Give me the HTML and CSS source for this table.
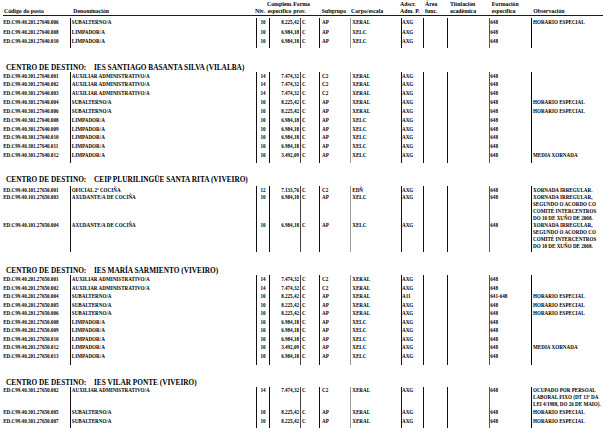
FILE: index.html
```html
<!DOCTYPE html>
<html lang="gl">
<head>
<meta charset="utf-8">
<title>RPT - Centros de destino</title>
<link rel="stylesheet" href="styles.css">
</head>
<body>
<div class="page">
  <div class="thead">
    <div class="th h-code">Código do posto</div>
    <div class="th h-den">Denominación</div>
    <div class="th h-niv">Niv.</div>
    <div class="th h-cmp">Complem.<br>específico</div>
    <div class="th h-fp">Forma<br>prov.</div>
    <div class="th h-sg">Subgrupo</div>
    <div class="th h-ce">Corpo/escala</div>
    <div class="th h-ad">Adscr.<br>Adm. P.</div>
    <div class="th h-ar">Área<br>func.</div>
    <div class="th h-ti">Titulación<br>académica</div>
    <div class="th h-fe">Formación<br>específica</div>
    <div class="th h-ob">Observación</div>
  </div>

  <div class="sec s1">
    <div class="rows">
      <div class="row"><span class="c code">ED.C99.40.201.27640.006</span><span class="c den">SUBALTERNO/A</span><span class="c niv">10</span><span class="c cmp">8.225,42</span><span class="c fp">C</span><span class="c sg">AP</span><span class="c ce">XERAL</span><span class="c ad">AXG</span><span class="c ar"></span><span class="c ti"></span><span class="c fe">648</span><span class="c ob">HORARIO ESPECIAL</span></div>
      <div class="row"><span class="c code">ED.C99.40.201.27640.008</span><span class="c den">LIMPADOR/A</span><span class="c niv">10</span><span class="c cmp">6.984,18</span><span class="c fp">C</span><span class="c sg">AP</span><span class="c ce">XELC</span><span class="c ad">AXG</span><span class="c ar"></span><span class="c ti"></span><span class="c fe">648</span><span class="c ob"></span></div>
      <div class="row"><span class="c code">ED.C99.40.201.27640.010</span><span class="c den">LIMPADOR/A</span><span class="c niv">10</span><span class="c cmp">6.984,18</span><span class="c fp">C</span><span class="c sg">AP</span><span class="c ce">XELC</span><span class="c ad">AXG</span><span class="c ar"></span><span class="c ti"></span><span class="c fe">648</span><span class="c ob"></span></div>
    </div>
  </div>

  <div class="sec s2">
    <h2 class="sec-title"><span class="lbl">CENTRO DE DESTINO:</span><span class="name">IES SANTIAGO BASANTA SILVA (VILALBA)</span></h2>
    <div class="rows">
      <div class="row"><span class="c code">ED.C99.40.301.27640.001</span><span class="c den">AUXILIAR ADMINISTRATIVO/A</span><span class="c niv">14</span><span class="c cmp">7.474,32</span><span class="c fp">C</span><span class="c sg">C2</span><span class="c ce">XERAL</span><span class="c ad">AXG</span><span class="c ar"></span><span class="c ti"></span><span class="c fe">648</span><span class="c ob"></span></div>
      <div class="row"><span class="c code">ED.C99.40.301.27640.002</span><span class="c den">AUXILIAR ADMINISTRATIVO/A</span><span class="c niv">14</span><span class="c cmp">7.474,32</span><span class="c fp">C</span><span class="c sg">C2</span><span class="c ce">XERAL</span><span class="c ad">AXG</span><span class="c ar"></span><span class="c ti"></span><span class="c fe">648</span><span class="c ob"></span></div>
      <div class="row"><span class="c code">ED.C99.40.301.27640.003</span><span class="c den">AUXILIAR ADMINISTRATIVO/A</span><span class="c niv">14</span><span class="c cmp">7.474,32</span><span class="c fp">C</span><span class="c sg">C2</span><span class="c ce">XERAL</span><span class="c ad">AXG</span><span class="c ar"></span><span class="c ti"></span><span class="c fe">648</span><span class="c ob"></span></div>
      <div class="row"><span class="c code">ED.C99.40.301.27640.004</span><span class="c den">SUBALTERNO/A</span><span class="c niv">10</span><span class="c cmp">8.225,42</span><span class="c fp">C</span><span class="c sg">AP</span><span class="c ce">XERAL</span><span class="c ad">AXG</span><span class="c ar"></span><span class="c ti"></span><span class="c fe">648</span><span class="c ob">HORARIO ESPECIAL</span></div>
      <div class="row"><span class="c code">ED.C99.40.301.27640.006</span><span class="c den">SUBALTERNO/A</span><span class="c niv">10</span><span class="c cmp">8.225,42</span><span class="c fp">C</span><span class="c sg">AP</span><span class="c ce">XERAL</span><span class="c ad">AXG</span><span class="c ar"></span><span class="c ti"></span><span class="c fe">648</span><span class="c ob">HORARIO ESPECIAL</span></div>
      <div class="row"><span class="c code">ED.C99.40.301.27640.008</span><span class="c den">LIMPADOR/A</span><span class="c niv">10</span><span class="c cmp">6.984,18</span><span class="c fp">C</span><span class="c sg">AP</span><span class="c ce">XELC</span><span class="c ad">AXG</span><span class="c ar"></span><span class="c ti"></span><span class="c fe">648</span><span class="c ob"></span></div>
      <div class="row"><span class="c code">ED.C99.40.301.27640.009</span><span class="c den">LIMPADOR/A</span><span class="c niv">10</span><span class="c cmp">6.984,18</span><span class="c fp">C</span><span class="c sg">AP</span><span class="c ce">XELC</span><span class="c ad">AXG</span><span class="c ar"></span><span class="c ti"></span><span class="c fe">648</span><span class="c ob"></span></div>
      <div class="row"><span class="c code">ED.C99.40.301.27640.010</span><span class="c den">LIMPADOR/A</span><span class="c niv">10</span><span class="c cmp">6.984,18</span><span class="c fp">C</span><span class="c sg">AP</span><span class="c ce">XELC</span><span class="c ad">AXG</span><span class="c ar"></span><span class="c ti"></span><span class="c fe">648</span><span class="c ob"></span></div>
      <div class="row"><span class="c code">ED.C99.40.301.27640.011</span><span class="c den">LIMPADOR/A</span><span class="c niv">10</span><span class="c cmp">6.984,18</span><span class="c fp">C</span><span class="c sg">AP</span><span class="c ce">XELC</span><span class="c ad">AXG</span><span class="c ar"></span><span class="c ti"></span><span class="c fe">648</span><span class="c ob"></span></div>
      <div class="row"><span class="c code">ED.C99.40.301.27640.012</span><span class="c den">LIMPADOR/A</span><span class="c niv">10</span><span class="c cmp">3.492,09</span><span class="c fp">C</span><span class="c sg">AP</span><span class="c ce">XELC</span><span class="c ad">AXG</span><span class="c ar"></span><span class="c ti"></span><span class="c fe">648</span><span class="c ob">MEDIA XORNADA</span></div>
    </div>
  </div>

  <div class="sec s3">
    <h2 class="sec-title"><span class="lbl">CENTRO DE DESTINO:</span><span class="name">CEIP PLURILINGÜE SANTA RITA (VIVEIRO)</span></h2>
    <div class="rows">
      <div class="row"><span class="c code">ED.C99.40.101.27650.001</span><span class="c den">OFICIAL 2ª COCIÑA</span><span class="c niv">12</span><span class="c cmp">7.133,76</span><span class="c fp">C</span><span class="c sg">C2</span><span class="c ce">EDÑ</span><span class="c ad">AXG</span><span class="c ar"></span><span class="c ti"></span><span class="c fe">648</span><span class="c ob">XORNADA IRREGULAR.</span></div>
      <div class="row tall"><span class="c code">ED.C99.40.101.27650.003</span><span class="c den">AXUDANTE/A DE COCIÑA</span><span class="c niv">10</span><span class="c cmp">6.984,18</span><span class="c fp">C</span><span class="c sg">AP</span><span class="c ce">XELC</span><span class="c ad">AXG</span><span class="c ar"></span><span class="c ti"></span><span class="c fe">648</span><span class="c ob">XORNADA IRREGULAR,<br>SEGUNDO O ACORDO CO<br>COMITÉ INTERCENTROS<br>DO 10 DE XUÑO DE 2008.</span></div>
      <div class="row tall"><span class="c code">ED.C99.40.101.27650.004</span><span class="c den">AXUDANTE/A DE COCIÑA</span><span class="c niv">10</span><span class="c cmp">6.984,18</span><span class="c fp">C</span><span class="c sg">AP</span><span class="c ce">XELC</span><span class="c ad">AXG</span><span class="c ar"></span><span class="c ti"></span><span class="c fe">648</span><span class="c ob">XORNADA IRREGULAR,<br>SEGUNDO O ACORDO CO<br>COMITÉ INTERCENTROS<br>DO 10 DE XUÑO DE 2008.</span></div>
    </div>
  </div>

  <div class="sec s4">
    <h2 class="sec-title"><span class="lbl">CENTRO DE DESTINO:</span><span class="name">IES MARÍA SARMIENTO (VIVEIRO)</span></h2>
    <div class="rows">
      <div class="row"><span class="c code">ED.C99.40.201.27650.001</span><span class="c den">AUXILIAR ADMINISTRATIVO/A</span><span class="c niv">14</span><span class="c cmp">7.474,32</span><span class="c fp">C</span><span class="c sg">C2</span><span class="c ce">XERAL</span><span class="c ad">AXG</span><span class="c ar"></span><span class="c ti"></span><span class="c fe">648</span><span class="c ob"></span></div>
      <div class="row"><span class="c code">ED.C99.40.201.27650.002</span><span class="c den">AUXILIAR ADMINISTRATIVO/A</span><span class="c niv">14</span><span class="c cmp">7.474,32</span><span class="c fp">C</span><span class="c sg">C2</span><span class="c ce">XERAL</span><span class="c ad">AXG</span><span class="c ar"></span><span class="c ti"></span><span class="c fe">648</span><span class="c ob"></span></div>
      <div class="row"><span class="c code">ED.C99.40.201.27650.004</span><span class="c den">SUBALTERNO/A</span><span class="c niv">10</span><span class="c cmp">8.225,42</span><span class="c fp">C</span><span class="c sg">AP</span><span class="c ce">XERAL</span><span class="c ad">A11</span><span class="c ar"></span><span class="c ti"></span><span class="c fe">641-648</span><span class="c ob">HORARIO ESPECIAL</span></div>
      <div class="row"><span class="c code">ED.C99.40.201.27650.005</span><span class="c den">SUBALTERNO/A</span><span class="c niv">10</span><span class="c cmp">8.225,42</span><span class="c fp">C</span><span class="c sg">AP</span><span class="c ce">XERAL</span><span class="c ad">AXG</span><span class="c ar"></span><span class="c ti"></span><span class="c fe">648</span><span class="c ob">HORARIO ESPECIAL</span></div>
      <div class="row"><span class="c code">ED.C99.40.201.27650.006</span><span class="c den">SUBALTERNO/A</span><span class="c niv">10</span><span class="c cmp">8.225,42</span><span class="c fp">C</span><span class="c sg">AP</span><span class="c ce">XERAL</span><span class="c ad">AXG</span><span class="c ar"></span><span class="c ti"></span><span class="c fe">648</span><span class="c ob">HORARIO ESPECIAL</span></div>
      <div class="row"><span class="c code">ED.C99.40.201.27650.008</span><span class="c den">LIMPADOR/A</span><span class="c niv">10</span><span class="c cmp">6.984,18</span><span class="c fp">C</span><span class="c sg">AP</span><span class="c ce">XELC</span><span class="c ad">AXG</span><span class="c ar"></span><span class="c ti"></span><span class="c fe">648</span><span class="c ob"></span></div>
      <div class="row"><span class="c code">ED.C99.40.201.27650.009</span><span class="c den">LIMPADOR/A</span><span class="c niv">10</span><span class="c cmp">6.984,18</span><span class="c fp">C</span><span class="c sg">AP</span><span class="c ce">XELC</span><span class="c ad">AXG</span><span class="c ar"></span><span class="c ti"></span><span class="c fe">648</span><span class="c ob"></span></div>
      <div class="row"><span class="c code">ED.C99.40.201.27650.010</span><span class="c den">LIMPADOR/A</span><span class="c niv">10</span><span class="c cmp">6.984,18</span><span class="c fp">C</span><span class="c sg">AP</span><span class="c ce">XELC</span><span class="c ad">AXG</span><span class="c ar"></span><span class="c ti"></span><span class="c fe">648</span><span class="c ob"></span></div>
      <div class="row"><span class="c code">ED.C99.40.201.27650.012</span><span class="c den">LIMPADOR/A</span><span class="c niv">10</span><span class="c cmp">3.492,09</span><span class="c fp">C</span><span class="c sg">AP</span><span class="c ce">XELC</span><span class="c ad">AXG</span><span class="c ar"></span><span class="c ti"></span><span class="c fe">648</span><span class="c ob">MEDIA XORNADA</span></div>
      <div class="row"><span class="c code">ED.C99.40.201.27650.013</span><span class="c den">LIMPADOR/A</span><span class="c niv">10</span><span class="c cmp">6.984,18</span><span class="c fp">C</span><span class="c sg">AP</span><span class="c ce">XELC</span><span class="c ad">AXG</span><span class="c ar"></span><span class="c ti"></span><span class="c fe">648</span><span class="c ob"></span></div>
    </div>
  </div>

  <div class="sec s5">
    <h2 class="sec-title"><span class="lbl">CENTRO DE DESTINO:</span><span class="name">IES VILAR PONTE (VIVEIRO)</span></h2>
    <div class="rows">
      <div class="row tall"><span class="c code">ED.C99.40.301.27650.002</span><span class="c den">AUXILIAR ADMINISTRATIVO/A</span><span class="c niv">14</span><span class="c cmp">7.474,32</span><span class="c fp">C</span><span class="c sg">C2</span><span class="c ce">XERAL</span><span class="c ad">AXG</span><span class="c ar"></span><span class="c ti"></span><span class="c fe">648</span><span class="c ob">OCUPADO POR PERSOAL<br>LABORAL FIXO (DT 13ª DA<br>LEI 4/1988, DO 26 DE MAIO).</span></div>
      <div class="row"><span class="c code">ED.C99.40.301.27650.005</span><span class="c den">SUBALTERNO/A</span><span class="c niv">10</span><span class="c cmp">8.225,42</span><span class="c fp">C</span><span class="c sg">AP</span><span class="c ce">XERAL</span><span class="c ad">AXG</span><span class="c ar"></span><span class="c ti"></span><span class="c fe">648</span><span class="c ob">HORARIO ESPECIAL</span></div>
      <div class="row"><span class="c code">ED.C99.40.301.27650.007</span><span class="c den">SUBALTERNO/A</span><span class="c niv">10</span><span class="c cmp">8.225,42</span><span class="c fp">C</span><span class="c sg">AP</span><span class="c ce">XERAL</span><span class="c ad">AXG</span><span class="c ar"></span><span class="c ti"></span><span class="c fe">648</span><span class="c ob">HORARIO ESPECIAL</span></div>
    </div>
  </div>
</div>
</body>
</html>
```

FILE: styles.css
```css
html, body {
  margin: 0;
  padding: 0;
  background: #fff;
}

.page {
  width: 616px;
  height: 439px;
  overflow: hidden;
  font-family: "Liberation Serif", "Times New Roman", serif;
  font-weight: bold;
  color: #000;
}

/* ---------- column header ---------- */
.thead {
  display: grid;
  grid-template-columns: 71px 183px 13px 25px 29px 29px 50px 25px 25px 41px 42px 1fr;
  align-items: end;
  padding-top: 1.3px;
  padding-bottom: 1px;
  font-size: 5.8px;
  line-height: 6.7px;
  white-space: nowrap;
  background: linear-gradient(#000, #000) 3px 100% / 600px 0.9px no-repeat;
}

.h-code { padding-left: 4px; }
.h-den  { padding-left: 2.3px; }
.h-niv  { padding-left: 1px; }
.h-cmp  { text-align: right; padding-right: 0.5px; }
.h-fp   { padding-left: 1.2px; }
.h-sg   { padding-left: 0.7px; }
.h-ce   { padding-left: 1px; }
.h-fe   { padding-left: 0.7px; }
.h-ob   { padding-left: 0.3px; }

/* ---------- sections ---------- */
.sec-title {
  margin: 0;
  height: 8px;
  line-height: 8px;
  font-size: 7.3px;
  font-weight: bold;
  padding-left: 6px;
  white-space: nowrap;
}

.lbl {
  display: inline-block;
  width: 88px;
}

.rows {
  background-image:
    linear-gradient(#111, #111),
    linear-gradient(#111, #111),
    linear-gradient(#111, #111),
    linear-gradient(#444, #444),
    linear-gradient(#111, #111),
    linear-gradient(#9c9c9c, #9c9c9c),
    linear-gradient(#111, #111),
    linear-gradient(#111, #111),
    linear-gradient(#111, #111),
    linear-gradient(#555, #555),
    linear-gradient(#000, #000);
  background-position:
    70px 0, 256px 0, 269px 0, 300px 0, 319px 0, 350px 0,
    401px 0, 423px 0, 447px 0, 489px 0, 531px 0;
  background-size:
    1px 100%, 1px 100%, 1px 100%, 1px 100%, 1px 100%, 1px 100%,
    1px 100%, 1px 100%, 1px 100%, 1px 100%, 1.4px 100%;
  background-repeat: no-repeat;
}

.row {
  display: grid;
  grid-template-columns: 71px 186px 12px 31px 20px 30px 51px 23px 24px 42px 42px 1fr;
  font-size: 5.1px;
  white-space: nowrap;
  height: var(--rh, 9px);
  line-height: var(--rh, 9px);
}

.row.tall {
  height: auto;
  line-height: var(--lh, 7px);
}

.c { overflow: visible; }
.code { padding-left: 3.2px; }
.den  { padding-left: 0.8px; }
.niv  { text-align: center; }
.cmp  { text-align: right; padding-right: 1px; }
.fp   { padding-left: 2px; }
.sg   { padding-left: 2px; }
.ce   { padding-left: 2.3px; }
.ad   { padding-left: 1px; }
.fe   { padding-left: 0.3px; }
.ob   { padding-left: 1px; }

/* section-specific vertical rhythm */
.s1 .rows { margin-top: 2.5px; padding-bottom: 1.5px; }
.s1 .row  { --rh: 9.5px; }

.s2 { margin-top: 15.3px; }
.s2 .row  { --rh: 8.85px; }
.s2 .rows { padding-bottom: 3.5px; }

.s3 { margin-top: 12.7px; }
.s3 .rows { margin-top: 1.75px; padding-bottom: 2px; }
.s3 .row  { --rh: 8.5px; --lh: 7px; }

.s4 { margin-top: 14.6px; }
.s4 .row  { --rh: 8.55px; }
.s4 .rows { padding-bottom: 4.5px; }

.s5 { margin-top: 14.5px; }
.s5 .row  { --rh: 8.7px; --lh: 6.8px; }
.s5 .rows { padding-bottom: 2.5px; }
```
